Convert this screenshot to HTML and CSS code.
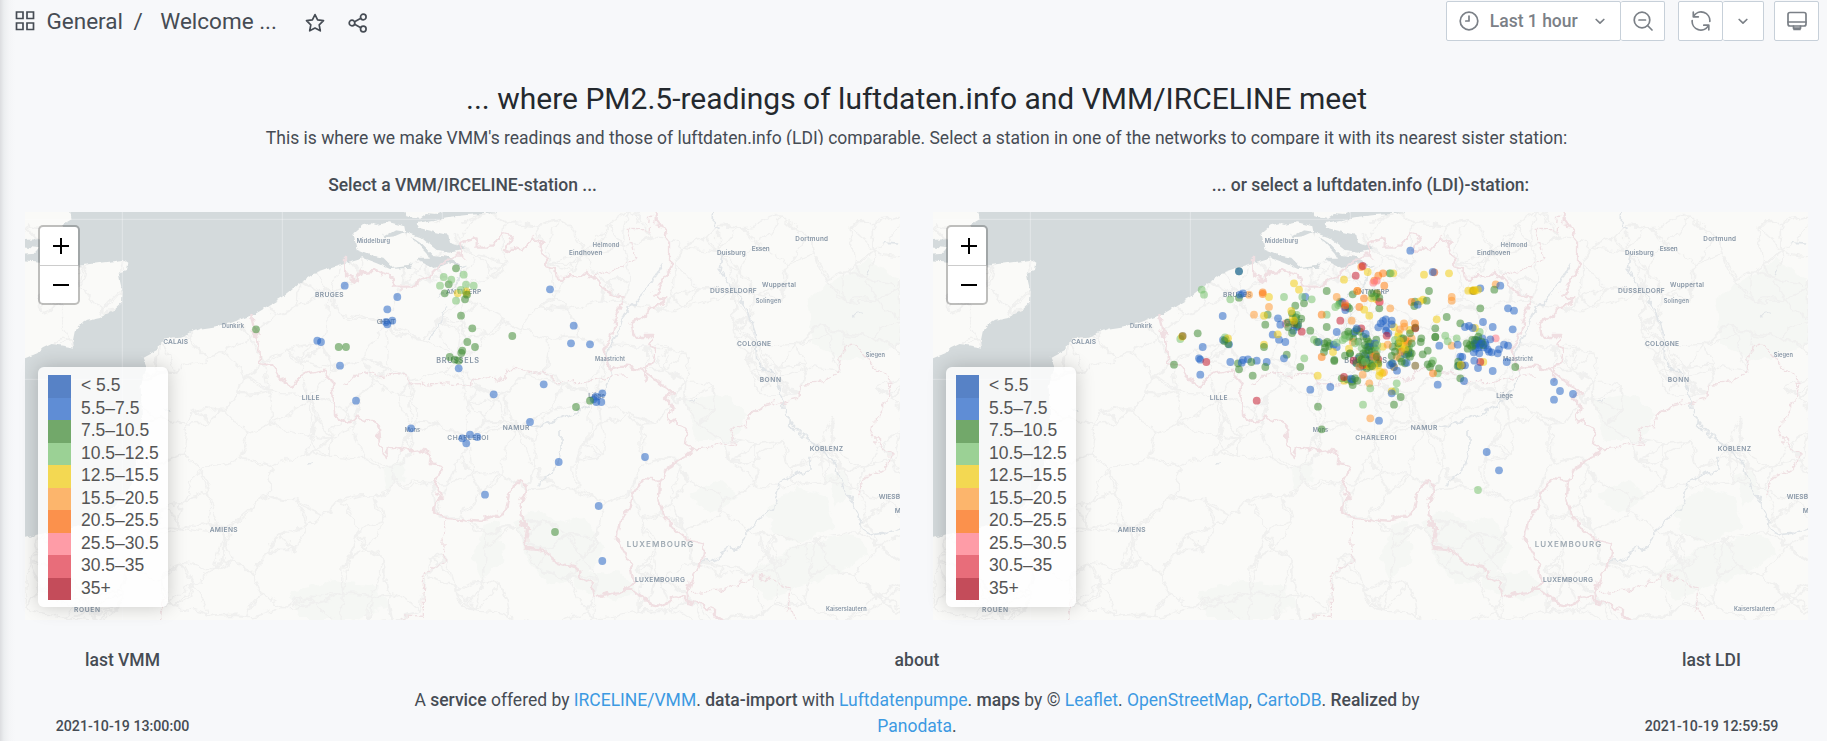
FILE: index.html
```html
<!DOCTYPE html>
<html lang="en">
<head>
<meta charset="utf-8">
<title>Welcome ...</title>
<link rel="stylesheet" href="styles.css">
</head>
<body>
<svg class="defs" width="0" height="0">
  <filter id="wobble" filterUnits="userSpaceOnUse" x="0" y="0" width="2760" height="1300" color-interpolation-filters="sRGB">
    <feTurbulence type="fractalNoise" baseFrequency=".03" numOctaves="3" seed="4"/>
    <feDisplacementMap in="SourceGraphic" scale="34" xChannelSelector="R" yChannelSelector="G" result="d"/>
    <feGaussianBlur in="d" stdDeviation="1.3"/>
  </filter>
  <filter id="shore" filterUnits="userSpaceOnUse" x="0" y="0" width="2760" height="1300" color-interpolation-filters="sRGB">
    <feTurbulence type="fractalNoise" baseFrequency=".04" numOctaves="3" seed="9"/>
    <feDisplacementMap in="SourceGraphic" scale="14" xChannelSelector="R" yChannelSelector="G" result="d"/>
    <feGaussianBlur in="d" stdDeviation="1"/>
  </filter>
  <filter id="soft" filterUnits="userSpaceOnUse" x="0" y="0" width="2760" height="1300" color-interpolation-filters="sRGB"><feGaussianBlur stdDeviation="1.300"/></filter>
  <symbol id="basemap" viewBox="0 0 875 408">
    <rect width="875" height="408" fill="#fafaf8"/>
    <g transform="translate(-25 -12) scale(.33333)">
      <g class="forest" filter="url(#wobble)">
        <path d="M1540 960l70-30 80 40 60-20 70 90-60 80-110 40-60-70zM1450 980l50-20 10 120-60 60-30-60zM2300 920l90-60 90 30 20 90-110 50-70-30zM2060 600l110-20 70 60-40 80-110 0zM2420 300l180-120 100 60 0 190-160 60-100-60zM2060 880l100-40 60 50-90 50zM2240 1120l150-80 160-40 60 60-170 90-140 50zM1700 1110l160 10 60 60-80 20-110-30zM870 1180l130-40 130 20 40 60-120 40-150 0zM1150 800l60-20 0 60-50 30zM2480 830l60-20 20 70-50 40z"/>
      </g>
      <g id="roads" class="roads" filter="url(#wobble)"></g>
      <g filter="url(#shore)">
        <path class="sea" d="M208 20L215 58 185 75 195 92 150 120 110 118 40 122 40 135 120 145 110 158 40 163 40 178 120 185 160 200 235 197 300 188 370 180 382 188 378 210 356 218 361 245 368 275 366 308 345 328 322 338 300 354 262 362 240 375 224 395 219 420 222 443 190 438 155 432 128 445 112 460 75 475 40 480 40 1022 110 1005 240 975 330 930 390 860 428 700 422 560 440 500 428 470 475 445 492 415 540 410 600 386 640 380 690 370 757 345 850 290 900 250 940 222 975 210 1040 190 1090 175 1130 190 1170 207 1230 203 1245 178 1275 190 1305 206 1345 190 1395 200 1350 172 1300 165 1270 135 1240 115 1215 118 1180 110 1215 95 1262 112 1310 150 1350 155 1400 145 1350 128 1345 105 1300 95 1258 85 1250 70 1300 60 1340 52 1400 45 1490 40 1490 20z"/>
        <path class="island" d="M1060 100l28-24 25-6 25 8 5 22 15 12 60-6 32 20 30 32 10 18-35 0-30 22-45 5-30-30-40-8-40-16zM1128 75l40-8 45 12 3 16-30-4-30 17-20-14zM1213 20l0 16 10 14 35 6 20-14 30 3 20-9 0-16zM1320 60l30-8 50 30-20 20-60-10z"/>
      </g>
      <path class="grid-line" d="M367 36V1260M847 36V290M1327 36V60M75 58H1320M75 538H425"/>
      <g class="rivers" filter="url(#wobble)">
        <path d="M2140 36V80l25 5M2170 150l-10 60 50 70 30 40 25 70 5 90 50 50 30 70 5 50 55 60 70 50 30 40 15 60 35 50 45 95 45-5 80-30M2430 770v35l-90 45-20 80-40 20-60 80-80 50-30 5M1990 190l-50 80-65 70-25 60-30 65 15 55-35 70-90 60-110 30M1680 690v70l-20 60-50 30M1290 420l30-60 20-50M1320 290l40-30 40-60"/>
        <path d="M2640 135l20-5 35 2M2600 220l10-15M2560 355l15-15 10 0M2070 600l15-10M490 635l15-10M925 790l10-4"/>
      </g>
      <g class="borders" filter="url(#wobble)">
        <path d="M757 345l8 50 13 35 2 55 35 10 20 35 45 30 15-25 30-15 40-8 20 23 13 25 7 80 2 5 37 23 35-18 55 25 5 55 15 35 20-20 45 10 45-7 35 42 25 5-20 65 25 35-30 40 20 17 120 10 75-27 10-55 40-32 20 10-25 62 5 40 20 25-7 55 42 5 50 40 65 20 5 25 35 20 10 47 55-22 65-3 50 43 25 5 50-28 60 18 50 20 35 38"/>
        <path d="M1875 1172l25-27-10-55-40-70 10-60 30-40 5-35 30-45 55 5-3 45 13 50 30 45 40 30 55 17-5 48-35 50-15 50v30M1980 845l20-40 65-40 10-15-20-20 5-50-55-20 10-40-20-20 30-20-30-20-50-35-5-17-65-8-45 5-20-60 20-25 15-60 30-65-15-5-50-30-25-25-20-20-40 17-55-2-5-25-25-5-15-65-25-25-35 45-50-10 20-35-25-8-30 38h-50v-28l-50 18 10 40-55 0-5 20-15 15-20 20-30 13-35 22h-45l-10-30-50-15-40 5-15 22-35-17v-55"/>
        <path d="M1970 20v45l40 55v80l-50 90 40 2-30 28-45 30-30 20 5 35h60l-15 25 20 20-15 50-25 10 25 38"/>
      </g>
      <g class="regions" filter="url(#wobble)">
        <path d="M1030 550l35-20 45-15 30 15 60-10 40 35 70-5 60 5 50-10 35-15 55 5 25-27 35 4 35 8 35-10 30 35h110l50-20h50M1880 88l70 2 5-40M1885 90l25 95-150 50M2240 645l55-25 105-30 5-40 75-5 40-45 10-60 35-5 45 55 60 50-10 70-30 45-10 60 50 40-5 40-70 40-25 60M2075 750l95-20 35 10-15-65 50 5 5-35 85-45M2070 1175l100-5 100-45 100 35-5 60 15 40M1335 960l-5 120-60 50v125l-70-5M478 1260l5-50 10-20"/>
      </g>
      <g class="labels" text-anchor="middle" filter="url(#soft)">
        <text x="1120" y="130" textLength="100" class="town">Middelburg</text>
        <text x="988" y="291" textLength="86">BRUGES</text>
        <text x="699" y="383" textLength="66" class="town">Dunkirk</text>
        <text x="527" y="432" textLength="75">CALAIS</text>
        <text x="932" y="599" textLength="53">LILLE</text>
        <text x="1158" y="373" textLength="56">GHENT</text>
        <text x="1391" y="281" textLength="106">ANTWERP</text>
        <text x="1373" y="488" textLength="128" class="capital">BRUSSELS</text>
        <text x="1818" y="142" textLength="80" class="town">Helmond</text>
        <text x="1757" y="164" textLength="100" class="town mid">Eindhoven</text>
        <text x="1830" y="482" textLength="90" class="town">Maastricht</text>
        <text x="1790" y="594" textLength="50" class="town mid">Liège</text>
        <text x="2194" y="166" textLength="86" class="town mid">Duisburg</text>
        <text x="2282" y="152" textLength="54" class="town mid">Essen</text>
        <text x="2435" y="123" textLength="98" class="town mid">Dortmund</text>
        <text x="2337" y="260" textLength="102" class="town mid">Wuppertal</text>
        <text x="2200" y="280" textLength="140">DÜSSELDORF</text>
        <text x="2305" y="310" textLength="76" class="town">Solingen</text>
        <text x="2262" y="437" textLength="102">COLOGNE</text>
        <text x="2626" y="470" textLength="58" class="town">Siegen</text>
        <text x="2311" y="547" textLength="64">BONN</text>
        <text x="1237" y="695" textLength="46" class="town">Mons</text>
        <text x="1404" y="721" textLength="124">CHARLEROI</text>
        <text x="1548" y="691" textLength="80">NAMUR</text>
        <text x="2479" y="752" textLength="100">KOBLENZ</text>
        <text x="2636" y="897" text-anchor="start">WIESB</text>
        <text x="2684" y="938" text-anchor="start">M</text>
        <text x="671" y="996" textLength="84">AMIENS</text>
        <text x="261" y="1236" textLength="78">ROUEN</text>
        <text x="1980" y="1040" textLength="200" class="country">LUXEMBOURG</text>
        <text x="1980" y="1146" textLength="150">LUXEMBOURG</text>
        <text x="2539" y="1233" textLength="122" class="town">Kaiserslautern</text>
      </g>
    </g>
  </symbol>
</svg>

<div class="page">
  <header class="toolbar">
    <div class="crumbs">
      <svg class="icon apps" width="20" height="20" viewBox="0 0 20 20"><path d="M1.500 1h6.500v6.500H1.500zM12 1h6.500v6.500H12zM1.500 12h6.500v6.500H1.500zM12 12h6.500v6.500H12z"/></svg>
      <span class="crumb folder">General</span><span class="crumb slash">/</span><span class="crumb">Welcome ...</span>
      <svg class="icon star" width="20" height="20" viewBox="0 0 20 20"><path d="M10 1.600l2.600 5.300 5.900.8-4.300 4.100 1.100 6L10 15l-5.300 2.800 1.100-6L1.500 7.700l5.900-.8z"/></svg>
      <svg class="icon share" width="20" height="20" viewBox="0 0 20 20"><circle cx="4" cy="10" r="2.800"/><circle cx="15.300" cy="4" r="2.800"/><circle cx="15.300" cy="16" r="2.800"/><path d="M6.600 8.700L12.800 5.300M6.600 11.300l6.200 3.400"/></svg>
    </div>
    <div class="actions">
      <div class="group">
        <button class="btn time">
          <svg class="icon" width="20" height="20" viewBox="0 0 20 20"><circle cx="10" cy="10" r="8.800"/><path d="M10 5v5H6.800"/></svg>
          <span>Last 1 hour</span>
          <svg class="icon chev" width="10" height="7" viewBox="0 0 10 7"><path d="M1.200 1.500l3.800 3.600 3.800-3.600"/></svg>
        </button>
        <button class="btn zoom"><svg class="icon" width="20" height="20" viewBox="0 0 20 20"><circle cx="9" cy="9" r="7.800"/><path d="M14.500 14.500L19 19M6 9h6.500"/></svg></button>
      </div>
      <div class="group">
        <button class="btn refresh"><svg class="icon" width="20" height="20" viewBox="0 0 20 20"><path d="M2.600 5.300A8.700 8.700 0 0 1 18.800 10.500M17.400 14.700A8.700 8.700 0 0 1 1.200 9.500M2.300 1.200v4.600h5M17.800 18.800v-4.600h-5"/></svg></button>
        <button class="btn interval"><svg class="icon chev" width="10" height="7" viewBox="0 0 10 7"><path d="M1.200 1.500l3.800 3.600 3.800-3.600"/></svg></button>
      </div>
      <div class="group">
        <button class="btn tv"><svg class="icon" width="20" height="20" viewBox="0 0 20 20"><rect x="1" y="1.500" width="18" height="13.500" rx="2"/><path d="M1 11h18M6.500 15v2.200h7V15M7 18.500h6"/></svg></button>
      </div>
    </div>
  </header>

  <section class="intro">
    <h1>... where PM2.5-readings of luftdaten.info and VMM/IRCELINE meet</h1>
    <p>This is where we make VMM's readings and those of luftdaten.info (LDI) comparable. Select a station in one of the networks to compare it with its nearest sister station:</p>
  </section>

  <main class="panels">
    <section class="panel">
      <h2>Select a VMM/IRCELINE-station ...</h2>
      <div class="map">
        <svg class="canvas" width="875" height="408" viewBox="0 0 875 408"><use href="#basemap" width="875" height="408"/><g id="vmm" class="dots"></g></svg>
        <div class="zoomer"><span><svg class="sign" width="16" height="16" viewBox="0 0 16 16"><path d="M0 8h16M8 0v16"/></svg></span><span><svg class="sign" width="16" height="16" viewBox="0 0 16 16"><path d="M0 8h16"/></svg></span></div>
        <div class="legend"></div>
      </div>
    </section>
    <section class="panel">
      <h2>... or select a luftdaten.info (LDI)-station:</h2>
      <div class="map">
        <svg class="canvas" width="875" height="408" viewBox="0 0 875 408"><use href="#basemap" width="875" height="408"/><g id="ldi" class="dots"></g></svg>
        <div class="zoomer"><span><svg class="sign" width="16" height="16" viewBox="0 0 16 16"><path d="M0 8h16M8 0v16"/></svg></span><span><svg class="sign" width="16" height="16" viewBox="0 0 16 16"><path d="M0 8h16"/></svg></span></div>
        <div class="legend"></div>
      </div>
    </section>
  </main>

  <footer class="foot">
    <section class="stamp"><h2>last VMM</h2><time>2021-10-19 13:00:00</time></section>
    <section class="about">
      <h2>about</h2>
      <p>A <b>service</b> offered by <a>IRCELINE/VMM</a>. <b>data-import</b> with <a>Luftdatenpumpe</a>. <b>maps</b> by © <a>Leaflet</a>. <a>OpenStreetMap</a>, <a>CartoDB</a>. <b>Realized</b> by <a>Panodata</a>.</p>
    </section>
    <section class="stamp"><h2>last LDI</h2><time>2021-10-19 12:59:59</time></section>
  </footer>
</div>
<script src="map.js"></script>
</body>
</html>
```
FILE: styles.css
```css
* { box-sizing: border-box; }
body { margin: 0; background: #f7f8fa; color: #464c54; font: 17.5px/26px Roboto, sans-serif; }
h1, h2, p { margin: 0; }
h2 { font-size: 17.5px; line-height: 26px; font-weight: 500; text-align: center; }
.defs { position: absolute; }
.page { width: 1827px; height: 741px; overflow: hidden; background: linear-gradient(90deg, #dcdde0 0, #eceef0 4px, #f4f5f7 9px, #f7f8fa 15px); }
.icon { display: block; fill: none; stroke: currentColor; stroke-width: 1.7; stroke-linejoin: round; stroke-linecap: round; flex: none; }
.apps { stroke-linejoin: miter; margin-right: 11.500px; }
.toolbar { height: 62px; padding: 1px 8px 0 15px; display: flex; justify-content: space-between; align-items: flex-start; }
.crumbs { display: flex; align-items: center; height: 40px; }
.crumb { font-size: 22.500px; line-height: 38px; white-space: pre; }
.slash { margin: 0 17.500px 0 10.500px; }
.star { margin: 3px 0 0 28px; }
.share { margin: 3px 0 0 22.500px; }
.actions { display: flex; color: #7b8087; }
.group { display: flex; margin-left: 10px; }
.group:nth-child(2) { margin-left: 13px; }
.btn { height: 40px; border: 1px solid #c7d0d9; background: #fff; color: inherit; font: 500 17.500px Roboto, sans-serif; display: flex; align-items: center; justify-content: center; padding: 0; border-radius: 2px; }
.btn + .btn { border-left: 0; }
.time { width: 175px; padding: 0 15px 0 12px; justify-content: space-between; }
.time span { margin-right: 6.500px; }
.zoom { width: 44px; }
.refresh { width: 45px; }
.interval { width: 41px; }
.tv { width: 45px; }
.intro { height: 83px; overflow: hidden; padding: 18px 9px 0 15px; text-align: center; white-space: nowrap; }
.intro h1 { font-size: 30px; line-height: 38px; font-weight: 400; color: #24292e; margin-bottom: 8px; }
.intro p { line-height: 24px; }
.panels { display: flex; gap: 33px; padding: 27px 0 0 25px; }
.panel { width: 875px; }
.panel h2 { margin-bottom: 14px; }
.map { position: relative; height: 408px; }
.canvas { display: block; }
.forest { fill: #f5f7f4; }
.roads { fill: none; stroke: #f0f0ef; stroke-width: 4; }
.sea { fill: #d4dadc; }
.island { fill: #fafaf8; }
.grid-line { stroke: #fff; stroke-opacity: .35; stroke-width: 3; fill: none; }
.rivers { fill: none; stroke: #e1e5e8; stroke-width: 5; stroke-linejoin: round; }
.borders { fill: none; stroke: #f0dfe2; stroke-width: 7; stroke-linejoin: round; }
.regions { fill: none; stroke: #efdfe2; stroke-width: 4; stroke-dasharray: 14 3; }
.labels { font: 600 20px Inter, sans-serif; fill: #8796a6; }
.labels .town { font-size: 17px; }
.labels .mid { font-size: 19px; }
.labels .capital { font-size: 22px; }
.labels .country { font-size: 24px; fill: #a0abb4; }
.dots circle { fill-opacity: .52; }
.zoomer { position: absolute; left: 13px; top: 13px; width: 42px; height: 80px; border: 2px solid rgba(0,0,0,.24); border-radius: 5px; background: #fff; background-clip: padding-box; }
.zoomer span { display: flex; align-items: center; justify-content: center; height: 38px; }
.zoomer span:first-child { padding-left: 3px; }
.zoomer span + span { border-top: 1px solid #ccc; padding-left: 3px; }
.sign { stroke: #000; stroke-width: 2; display: block; }
.legend { position: absolute; left: 13px; top: 155px; width: 130px; height: 240px; padding: 8px 10px; border-radius: 6px; background: rgba(255,255,255,.8); box-shadow: 0 0 19px rgba(0,0,0,.2); font: 17.500px/21px "Liberation Sans", sans-serif; color: #555; white-space: nowrap; }
.legend div { display: flex; gap: 10.500px; height: 22.500px; }
.legend i { width: 22.500px; height: 22.500px; flex: none; }
.foot { display: grid; grid-template-columns: 215px 1fr 215px; padding: 27px 8px 0 15px; }
.stamp { display: flex; flex-direction: column; align-items: center; }
.stamp time { margin-top: 41px; font-size: 14.200px; line-height: 24px; font-weight: 500; }
.about { text-align: center; }
.about p { max-width: 1060px; margin: 14px auto 0; line-height: 26px; }
.about b { font-weight: 500; }
.about a { color: #3d9ae2; }
```
FILE: map.js
```js
const SVG = 'http://www.w3.org/2000/svg';
const colors = { b: '#1f60c4', g: '#37872d', l: '#73bf69', y: '#f2cc0c', p: '#ff9830', o: '#ff780a', k: '#ff7383', r: '#c4162a', w: '#6b5510', o2: '#d8500f' };

let seed = 11;
const rnd = () => (seed = (seed * 16807) % 2147483647) / 2147483647;

// Station positions are kept in sub-pixels (a third of a pixel) relative to a block origin.
const vmm = [
  [-25, -12, {
    b: '1034,257 1192,291 1162,328 1158,366 1177,362 1162,373 952,422 963,426 1020,497 1068,602 1233,685',
    g: '768,388 1016,441 1038,441'
  }],
  [415, -12, {
    l: '11,231 34,239 71,224 78,254 101,257 0,257 48,302 62,270',
    y: '53,280 79,274 79,281',
    g: '48,205 26,253 14,280 75,298 81,284 63,347 97,385 217,408 82,426 105,441 67,452 64,459 29,471 45,479 56,482 450,602 408,621',
    b: '330,268 401,377 393,430 450,433 56,505 311,553 161,583 487,580 468,590 461,598 469,606 484,606'
  }],
  [415, 188, { b: '270,66 90,104 67,115 112,111 79,130 356,186 615,171 135,284 476,318 487,483', g: '345,396' }]
];
const ldi = [
  [227, 18, {
    l: '125,179 132,194 211,208 372,201 455,208 427,201 61,327 462,329 433,385 195,322 410,255',
    g: '237,124 237,203 316,284 323,254 406,227 432,220 451,302 113,310 42,404 237,418 234,400 278,437 316,411 421,411 380,374 312,351 274,396 474,530 396,250 383,277 414,284 424,266 396,309 408,262 385,292 410,291 403,276 193,333 205,342 197,328 471,336',
    y: '327,201 312,257 402,160 417,179 473,437 312,344 353,313 204,325 66,320 394,243 398,264 402,272',
    o: '308,187 308,192', p: '267,194 327,231 282,254', k: '377,281', r: '139,396 290,512 425,305', w: '68,318 403,283',
    b: '237,124 249,190 240,194 188,258 128,351 117,385 121,389 121,434 211,396 245,398 249,390 264,388 290,392 320,396 372,385 354,265 361,284 376,336 357,329 338,314 436,201 476,336 451,479 207,343 189,330 400,302 413,288'
  }],
  [387, 18, {
    l: '20,254 212,130 376,317 383,334 410,325 353,430 339,392 230,460 151,475 226,483 129,524 479,306 84,312 474,780 46,231 60,215 50,338 68,330 30,341 75,325 105,340 125,355 150,350 170,362 135,395 160,400 225,330 245,325 240,360 268,350 172,345 160,200 55,225 420,410',
    p: '50,201 95,272 211,235 252,280 395,347 527,163 395,201 395,212 148,460 151,565 112,183 203,344 253,290 128,434 98,336 160,380 230,380 275,325 265,335 258,345 192,427 118,410 171,190 240,298',
    o: '189,130 175,137 193,167 132,205 275,216 285,280 339,430 118,231 5,254 5,381 163,152 124,111 112,183 256,330 262,340 172,395 168,375 76,226 244,365',
    k: '160,158 170,152 527,325 180,215 163,380 75,220',
    y: '72,149 220,130 312,134 387,130 350,268 309,209 133,239 148,257 39,366 215,484 222,291 490,396 445,182 457,182 465,183 462,180 474,179 465,294 143,126 178,437 300,214 236,310 234,320 240,333 250,343 255,358 240,350 262,362 180,425 87,356 130,405 145,407 155,395 163,410 175,405 165,345 188,350 422,405 155,205 170,208 73,452 270,300 235,350 187,430 123,388',
    g: '327,183 523,179 320,212 380,261 481,235 421,280 346,295 346,321 346,321 304,325 302,336 323,362 308,373 323,403 330,411 357,415 335,400 421,445 586,411 20,183 20,291 178,235 222,524 242,501 5,598 413,408 443,356 457,330 415,395 450,345 209,130 98,193 155,190 170,190 165,200 178,203 60,220 88,235 83,230 13,340 22,336 27,348 15,353 12,366 43,390 43,393 90,370 90,370 75,377 65,445 82,448 95,455 105,445 98,465 112,452 88,320 100,310 110,300 100,325 85,305 75,315 120,305 130,320 140,325 145,335 135,345 150,340 160,350 145,360 130,370 155,365 165,355 118,380 125,390 135,385 145,395 155,385 165,390 130,410 140,415 150,410 170,380 110,400 175,400 115,335 265,360 275,370 260,375 240,385 225,365 235,340 250,325 270,310 218,350 255,400 245,395 275,340 215,400 270,368 283,228 470,340 460,345 465,330 485,335 475,320 490,345 440,340 455,350 285,215 169,329 215,378 150,400 156,408 142,352 138,362 152,375 128,398 146,388 122,402 270,380',
    b: '271,62 338,126 481,175 541,167 564,235 582,242 489,276 518,291 578,298 435,291 447,288 458,294 358,347 413,344 487,325 511,328 552,344 564,347 537,358 533,370 515,367 503,358 507,365 497,345 490,352 479,345 470,330 465,340 475,333 483,340 476,352 468,345 478,370 461,367 463,392 474,414 518,423 560,396 427,381 435,406 416,407 432,453 421,380 702,456 702,509 720,483 759,492 500,666 537,721 353,464 177,572 31,471 215,490 50,306 50,351 293,224 231,422 182,280 189,273 197,268 215,272 215,283 175,292 198,290 205,310 198,302 65,215 68,218 76,240 104,305 110,295 137,312 93,446 97,448 108,398 115,385 120,410 135,375 165,340 145,350 255,373 260,398 210,405 218,400 265,370 148,390 467,356 495,338 41,344',
    r: '107,137 128,108 61,272 72,441 178,216 481,396 200,317 124,295 101,392 286,295 165,372 128,405 175,388 75,232',
    o2: '343,127', w: '286,407 222,411 460,183 427,406 286,293 145,402'
  }]
];

function draw(id, blocks) {
  const stations = [];
  for (const [ox, oy, sets] of blocks)
    for (const key in sets)
      for (const pair of sets[key].split(' ')) {
        const [x, y] = pair.split(',').map(Number);
        stations.push([rnd(), ox + x / 3, oy + y / 3, colors[key]]);
      }
  stations.sort((a, b) => a[0] - b[0]);
  const host = document.getElementById(id);
  for (const [, x, y, fill] of stations) {
    const c = document.createElementNS(SVG, 'circle');
    c.setAttribute('cx', x.toFixed(1));
    c.setAttribute('cy', y.toFixed(1));
    c.setAttribute('r', 3.9);
    c.setAttribute('fill', fill);
    host.append(c);
  }
}
draw('vmm', vmm);
draw('ldi', ldi);

// Road web: short winding links between nearby junctions, denser around the cities.
const nodes = [[671, 990], [932, 592], [1158, 366], [1390, 275], [1373, 480], [1404, 714], [1548, 684], [1790, 590], [1757, 157], [2262, 430], [2200, 274], [2311, 540], [2479, 745], [1980, 1139], [988, 284], [1237, 689], [261, 1230]];
const hubs = nodes.length;
for (let gx = 60; gx < 2740; gx += 90)
  for (let gy = 30; gy < 1280; gy += 90)
    nodes.push([gx + rnd() * 85, gy + rnd() * 85]);
let d = '';
nodes.forEach(([x, y], i) => {
  const near = nodes.map(([a, b], j) => [Math.hypot(a - x, b - y), j]).sort((p, q) => p[0] - q[0]).slice(1, i < hubs ? 9 : 4);
  for (const [len, j] of near) {
    const [a, b] = nodes[j], k = () => (rnd() - .5) * len * .3;
    d += `M${x | 0} ${y | 0}C${(x * 2 + a) / 3 + k() | 0} ${(y * 2 + b) / 3 + k() | 0} ${(x + a * 2) / 3 + k() | 0} ${(y + b * 2) / 3 + k() | 0} ${a | 0} ${b | 0}`;
  }
});
const roads = document.createElementNS(SVG, 'path');
roads.setAttribute('d', d);
document.getElementById('roads').append(roads);

const bands = [['#5782c6', '< 5.5'], ['#5f8dd5', '5.5–7.5'], ['#72a86a', '7.5–10.5'], ['#9bd195', '10.5–12.5'], ['#f3d852', '12.5–15.5'], ['#fcb56c', '15.5–20.5'], ['#fb914c', '20.5–25.5'], ['#fe9ca7', '25.5–30.5'], ['#e86d7a', '30.5–35'], ['#c44c5a', '35+']];
document.querySelectorAll('.legend').forEach(box => {
  box.innerHTML = bands.map(([c, t]) => `<div><i style="background:${c}"></i>${t}</div>`).join('');
});
```
